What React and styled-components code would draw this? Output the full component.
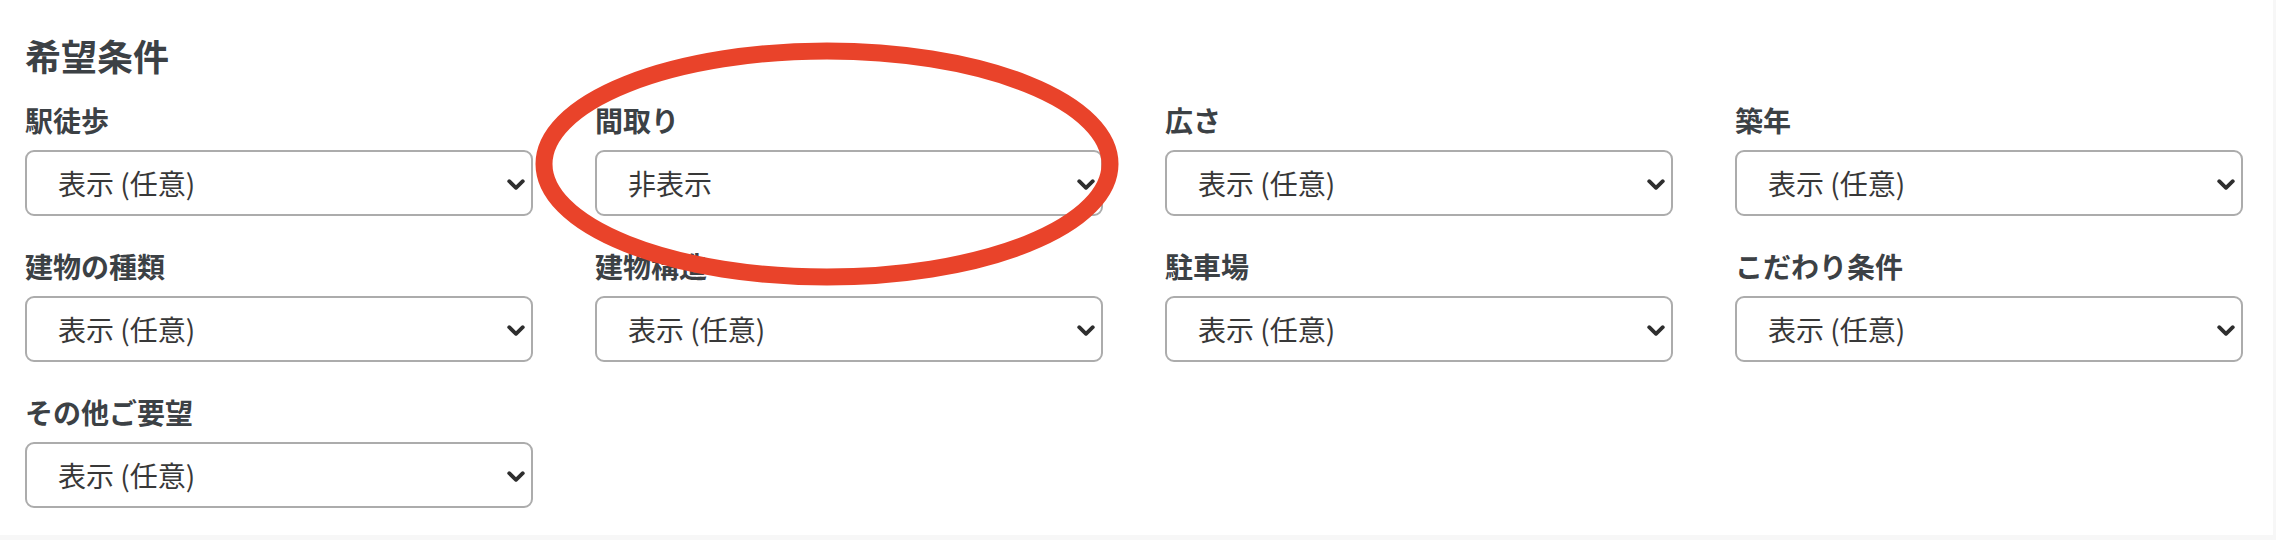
import React from "react";
import styled, { createGlobalStyle } from "styled-components";

const GlobalStyle = createGlobalStyle`
  html, body {
    margin: 0;
    padding: 0;
    background: #f7f7f7;
  }
  body {
    font-family: "Noto Sans CJK JP", "Noto Sans", sans-serif;
  }
`;

const Card = styled.section`
  position: relative;
  box-sizing: border-box;
  width: 2273px;
  height: 535px;
  background: #ffffff;
  padding: 37px 30px 28px 25px;
`;

const Title = styled.h2`
  margin: 0 0 33px 0;
  font-size: 36px;
  line-height: 36px;
  font-weight: 700;
  color: #3c4145;
`;

const Grid = styled.div`
  display: grid;
  grid-template-columns: repeat(4, 1fr);
  column-gap: 62px;
  row-gap: 36px;
`;

const Field = styled.div`
  display: flex;
  flex-direction: column;
  gap: 16px;
`;

const Label = styled.label`
  font-size: 28px;
  line-height: 28px;
  font-weight: 700;
  color: #3c4145;
  white-space: nowrap;
`;

const SelectWrap = styled.div`
  position: relative;
  height: 66px;
`;

const Select = styled.select`
  appearance: none;
  -webkit-appearance: none;
  box-sizing: border-box;
  width: 100%;
  height: 66px;
  margin: 0;
  padding: 0 40px 0 31px;
  border: 2px solid #acacac;
  border-radius: 9px;
  background: #ffffff;
  font-family: "Noto Sans CJK JP", "Noto Sans", sans-serif;
  font-size: 28px;
  font-weight: 400;
  color: #383838;
  outline: none;
`;

const Chevron = styled.svg`
  position: absolute;
  right: 8px;
  top: 29px;
  width: 18px;
  height: 12px;
  pointer-events: none;
`;

const Annotation = styled.svg`
  position: absolute;
  left: 526px;
  top: 30px;
  width: 602px;
  height: 270px;
  pointer-events: none;
`;

const fields = [
  { label: "駅徒歩", value: "optional" },
  { label: "間取り", value: "hidden" },
  { label: "広さ", value: "optional" },
  { label: "築年", value: "optional" },
  { label: "建物の種類", value: "optional" },
  { label: "建物構造", value: "optional" },
  { label: "駐車場", value: "optional" },
  { label: "こだわり条件", value: "optional" },
  { label: "その他ご要望", value: "optional" },
];

function SelectField({ label, value, id }) {
  return (
    <Field>
      <Label htmlFor={id}>{label}</Label>
      <SelectWrap>
        <Select id={id} defaultValue={value}>
          <option value="optional">表示 (任意)</option>
          <option value="required">表示 (必須)</option>
          <option value="hidden">非表示</option>
        </Select>
        <Chevron viewBox="0 0 18 12">
          <polyline
            points="2.2,2.2 9,8.8 15.8,2.2"
            fill="none"
            stroke="#2e2e2e"
            strokeWidth="3.8"
            strokeLinecap="round"
            strokeLinejoin="round"
          />
        </Chevron>
      </SelectWrap>
    </Field>
  );
}

export default function App() {
  return (
    <>
      <GlobalStyle />
      <Card>
        <Title>希望条件</Title>
        <Grid>
          {fields.map((f, i) => (
            <SelectField key={f.label} id={`f${i}`} label={f.label} value={f.value} />
          ))}
        </Grid>
        <Annotation viewBox="0 0 602 270">
          <ellipse
            cx="301"
            cy="134"
            rx="283"
            ry="113"
            fill="none"
            stroke="#e9432a"
            strokeWidth="17"
          />
        </Annotation>
      </Card>
    </>
  );
}
